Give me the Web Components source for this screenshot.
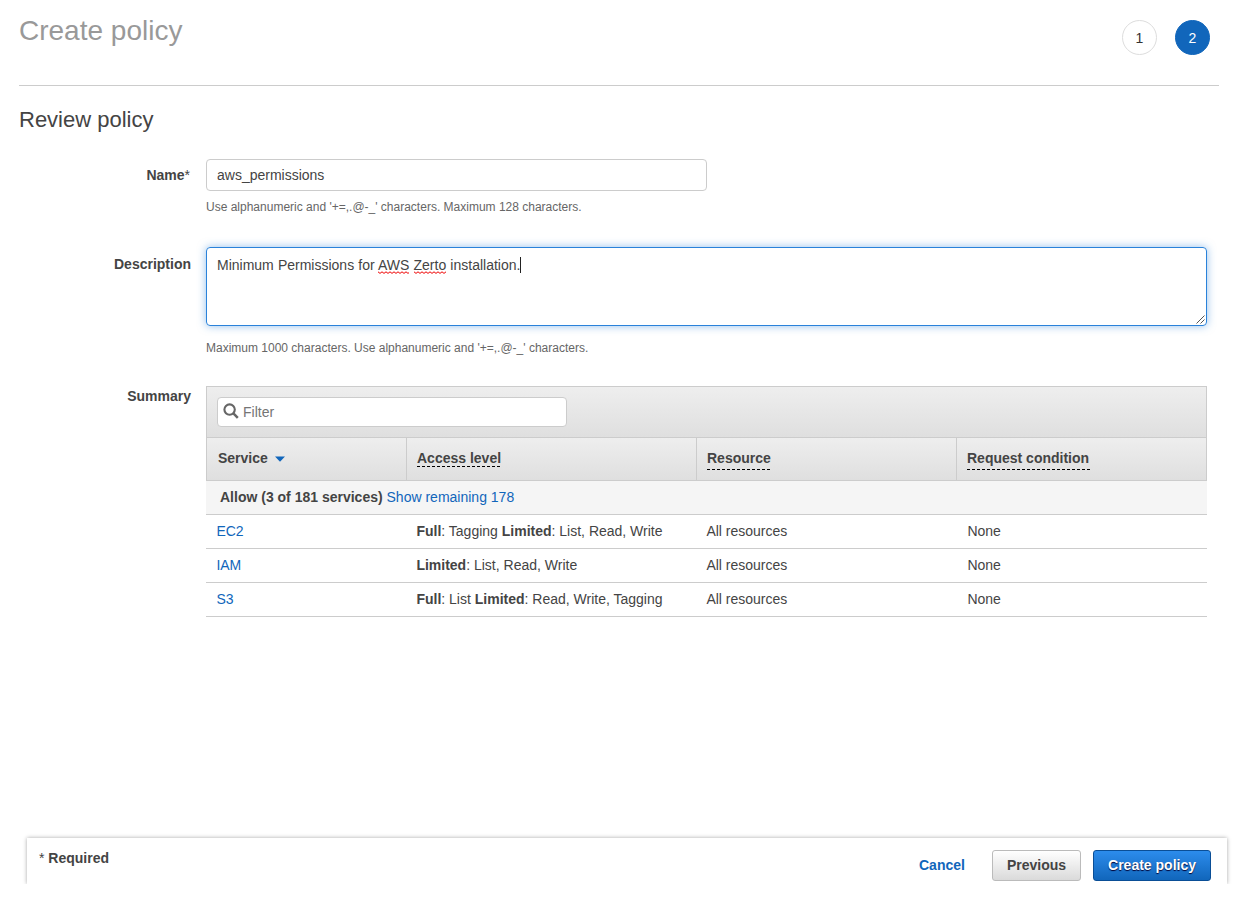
<!DOCTYPE html>
<html lang="en">
<head>
<meta charset="utf-8">
<title>Create policy</title>
<style>
  * { box-sizing: border-box; }
  body {
    margin: 0;
    height: 907px;
    overflow: hidden;
    background: #fff;
    color: #444;
    font: 14px/20px "Liberation Sans", Arial, sans-serif;
  }
</style>
</head>
<body>

<policy-wizard>
  <wizard-header slot="header">
    Create policy
    <wizard-step slot="steps">1</wizard-step>
    <wizard-step slot="steps" active>2</wizard-step>
  </wizard-header>

  <form-row style="--row-height: 88px; --label-right: 1px">
    <span slot="label">Name<span style="font-weight: normal">*</span></span>
    <text-input>aws_permissions</text-input>
    <field-hint>Use alphanumeric and '+=,.@-_' characters. Maximum 128 characters.</field-hint>
  </form-row>

  <form-row style="--row-height: 139px; --label-top: 7px">
    <span slot="label">Description</span>
    <text-area>Minimum Permissions for <spell-error>AWS</spell-error> <spell-error>Zerto</spell-error> installation.</text-area>
    <field-hint style="--hint-top: 12px">Maximum 1000 characters. Use alphanumeric and '+=,.@-_' characters.</field-hint>
  </form-row>

  <form-row style="--label-top: 0px">
    <span slot="label">Summary</span>
    <summary-table>
      <summary-row service="EC2" resource="All resources" condition="None"><b>Full</b>: Tagging <b>Limited</b>: List, Read, Write</summary-row>
      <summary-row service="IAM" resource="All resources" condition="None"><b>Limited</b>: List, Read, Write</summary-row>
      <summary-row service="S3" resource="All resources" condition="None"><b>Full</b>: List <b>Limited</b>: Read, Write, Tagging</summary-row>
    </summary-table>
  </form-row>

  <wizard-footer slot="footer">
    <aws-button kind="link">Cancel</aws-button>
    <aws-button>Previous</aws-button>
    <aws-button kind="primary">Create policy</aws-button>
  </wizard-footer>
</policy-wizard>

<script>
  // Registers an element whose shadow root is filled from a render function
  const define = (name, render) => {
    customElements.define(name, class extends HTMLElement {
      constructor() {
        super();
        this.attachShadow({ mode: 'open' });
      }

      connectedCallback() {
        this.shadowRoot.innerHTML = `<style>* { box-sizing: border-box; }</style>${render(this)}`;
      }
    });
  };

  define('policy-wizard', () => `
    <style>
      :host {
        display: flex;
        flex-direction: column;
        height: 884px;
      }
      main { flex: 1; padding: 19px 30px 0 19px; }
      h2 { margin: 0 0 24px; font-size: 22px; line-height: 30px; font-weight: normal; }
    </style>
    <slot name="header"></slot>
    <main>
      <h2>Review policy</h2>
      <slot></slot>
    </main>
    <slot name="footer"></slot>
  `);

  define('wizard-header', () => `
    <style>
      :host {
        display: flex;
        justify-content: space-between;
        height: 86px;
        margin: 0 18px 0 19px;
        padding-right: 9px;
        border-bottom: 1px solid #ccc;
      }
      h1 { margin: 14px 0 0; font-size: 28px; line-height: 34px; font-weight: normal; color: #999; }
      nav { display: flex; gap: 18px; padding-top: 20px; }
    </style>
    <h1><slot></slot></h1>
    <nav><slot name="steps"></slot></nav>
  `);

  define('wizard-step', () => `
    <style>
      :host {
        display: flex;
        align-items: center;
        justify-content: center;
        width: 35px;
        height: 35px;
        padding-top: 1px;
        box-sizing: border-box;
        border: 1px solid #ddd;
        border-radius: 50%;
        color: #333;
      }
      :host([active]) { background: #1166bb; border-color: #1166bb; color: #fff; }
    </style>
    <slot></slot>
  `);

  define('form-row', () => `
    <style>
      :host {
        display: grid;
        grid-template-columns: 172px 1001px;
        column-gap: 15px;
        height: var(--row-height, auto);
      }
      .label {
        padding: var(--label-top, 6px) var(--label-right, 0) 0 0;
        text-align: right;
        font-weight: bold;
      }
    </style>
    <div class="label"><slot name="label"></slot></div>
    <div><slot></slot></div>
  `);

  define('text-input', () => `
    <style>
      :host {
        display: block;
        box-sizing: border-box;
        width: 501px;
        height: 32px;
        padding: 5px 10px;
        border: 1px solid #ccc;
        border-radius: 4px;
        background: #fff;
      }
    </style>
    <slot></slot>
  `);

  define('text-area', () => `
    <style>
      :host {
        display: flex;
        justify-content: space-between;
        box-sizing: border-box;
        height: 79px;
        padding: 7px 1px 1px 10px;
        border: 1px solid #2a82da;
        border-radius: 4px;
        box-shadow: 0 0 8px rgba(42, 130, 218, .5);
        word-spacing: .25px;
      }
      .caret { display: inline-block; width: 1px; height: 16px; background: #222; vertical-align: -3px; }
      svg { align-self: flex-end; }
    </style>
    <div><slot></slot><span class="caret"></span></div>
    <svg width="9" height="9" viewBox="0 0 9 9" stroke="#555" fill="none">
      <path d="M0.5 8.5 8.5 .5M4.5 8.5 8.5 4.5"/>
    </svg>
  `);

  // Squiggle is a 4px zigzag tile right under the baseline
  define('spell-error', () => `
    <style>
      span {
        padding-bottom: 1px;
        background: url("data:image/svg+xml,%3Csvg xmlns='http://www.w3.org/2000/svg' width='4' height='3'%3E%3Cpath d='M0 .8 2 2.4 4 .8' fill='none' stroke='%23e00'/%3E%3C/svg%3E") 0 100% repeat-x;
      }
    </style>
    <span><slot></slot></span>
  `);

  define('field-hint', () => `
    <style>
      :host {
        display: block;
        margin-top: var(--hint-top, 6px);
        font-size: 12px;
        color: #666;
      }
    </style>
    <slot></slot>
  `);

  define('summary-table', () => `
    <style>
      :host { display: block; }
      .toolbar, .head {
        border: 1px solid #ccc;
        background: linear-gradient(#eee, #dfdfdf);
      }
      .toolbar { height: 51px; padding: 10px; border-bottom: 0; }
      .filter {
        display: flex;
        align-items: center;
        width: 350px;
        height: 30px;
        padding-left: 5px;
        gap: 4px;
        border: 1px solid #ccc;
        border-radius: 4px;
        background: #fff;
        color: #757575;
      }
      .filter svg { margin-top: -3px; }
      .head {
        display: grid;
        grid-template-columns: 199px 290px 260px 250px;
        height: 44px;
        font-weight: bold;
      }
      .head > div { padding: 10px 10px 0; border-left: 1px solid #ccc; }
      .head > div:first-child { display: flex; gap: 7px; padding-left: 11px; border-left: 0; }
      .head svg { margin-top: 8px; }
      .head span {
        display: inline-block;
        height: 22px;
        padding-right: 1px;
        background: repeating-linear-gradient(90deg, #000 0 3px, transparent 3px 5px) bottom / 100% 1px no-repeat;
      }
      .head .close { height: 19px; }
      .group {
        height: 34px;
        padding: 6px 14px;
        border-bottom: 1px solid #ccc;
        background: #f5f5f5;
      }
      a { color: #1166bb; }
    </style>
    <div class="toolbar">
      <div class="filter">
        <svg width="16" height="16" viewBox="0 0 16 16" fill="none" stroke="#666" stroke-width="2.1">
          <circle cx="6.6" cy="6.6" r="5.2"/>
          <path d="M10.4 10.4 14.8 14.8" stroke-width="2.5"/>
        </svg>
        Filter
      </div>
    </div>
    <div class="head">
      <div>Service
        <svg width="10" height="6" viewBox="0 0 10 6"><path d="M0 .5H10L5 5.8Z" fill="#1166bb"/></svg>
      </div>
      <div><span class="close">Access level</span></div>
      <div><span>Resource</span></div>
      <div><span>Request condition</span></div>
    </div>
    <div class="group"><b>Allow (3 of 181 services)</b> <a>Show remaining 178</a></div>
    <slot></slot>
  `);

  define('summary-row', (el) => `
    <style>
      :host {
        display: grid;
        grid-template-columns: 200px 290px 261px 250px;
        box-sizing: border-box;
        height: 34px;
        border-bottom: 1px solid #ccc;
      }
      div { padding: 6px 10px 6px 10.4px; white-space: nowrap; }
      a { color: #1166bb; }
    </style>
    <div><a>${el.getAttribute('service')}</a></div>
    <div><slot></slot></div>
    <div>${el.getAttribute('resource')}</div>
    <div>${el.getAttribute('condition')}</div>
  `);

  // The shadow is cut off below, so the bar looks docked to the page
  define('wizard-footer', () => `
    <style>
      :host { display: block; padding: 6px 6px 0; overflow: hidden; }
      .bar {
        display: flex;
        justify-content: space-between;
        height: 46px;
        margin: 0 4px 0 21px;
        padding: 0 16px 0 12px;
        box-shadow: 0 0 4px rgba(0, 0, 0, .35);
      }
      .required { padding-top: 10px; font-weight: bold; }
      .required span { font-weight: normal; }
      .actions { display: flex; gap: 12px; padding-top: 12px; }
    </style>
    <div class="bar">
      <div class="required"><span>*</span> Required</div>
      <div class="actions"><slot></slot></div>
    </div>
  `);

  define('aws-button', () => `
    <style>
      :host {
        display: block;
        box-sizing: border-box;
        height: 31px;
        padding: 0 14px;
        border: 1px solid #bbb;
        border-radius: 3px;
        background: linear-gradient(#fff, #dadada);
        font-weight: bold;
        line-height: 29px;
      }
      :host([kind="primary"]) {
        border-color: #0a4e96;
        background: linear-gradient(#2c8cec, #1166bb);
        color: #fff;
        text-shadow: 0 1px 1px #003;
      }
      :host([kind="link"]) {
        border-color: transparent;
        background: none;
        color: #1166bb;
      }
    </style>
    <slot></slot>
  `);
</script>
</body>
</html>
